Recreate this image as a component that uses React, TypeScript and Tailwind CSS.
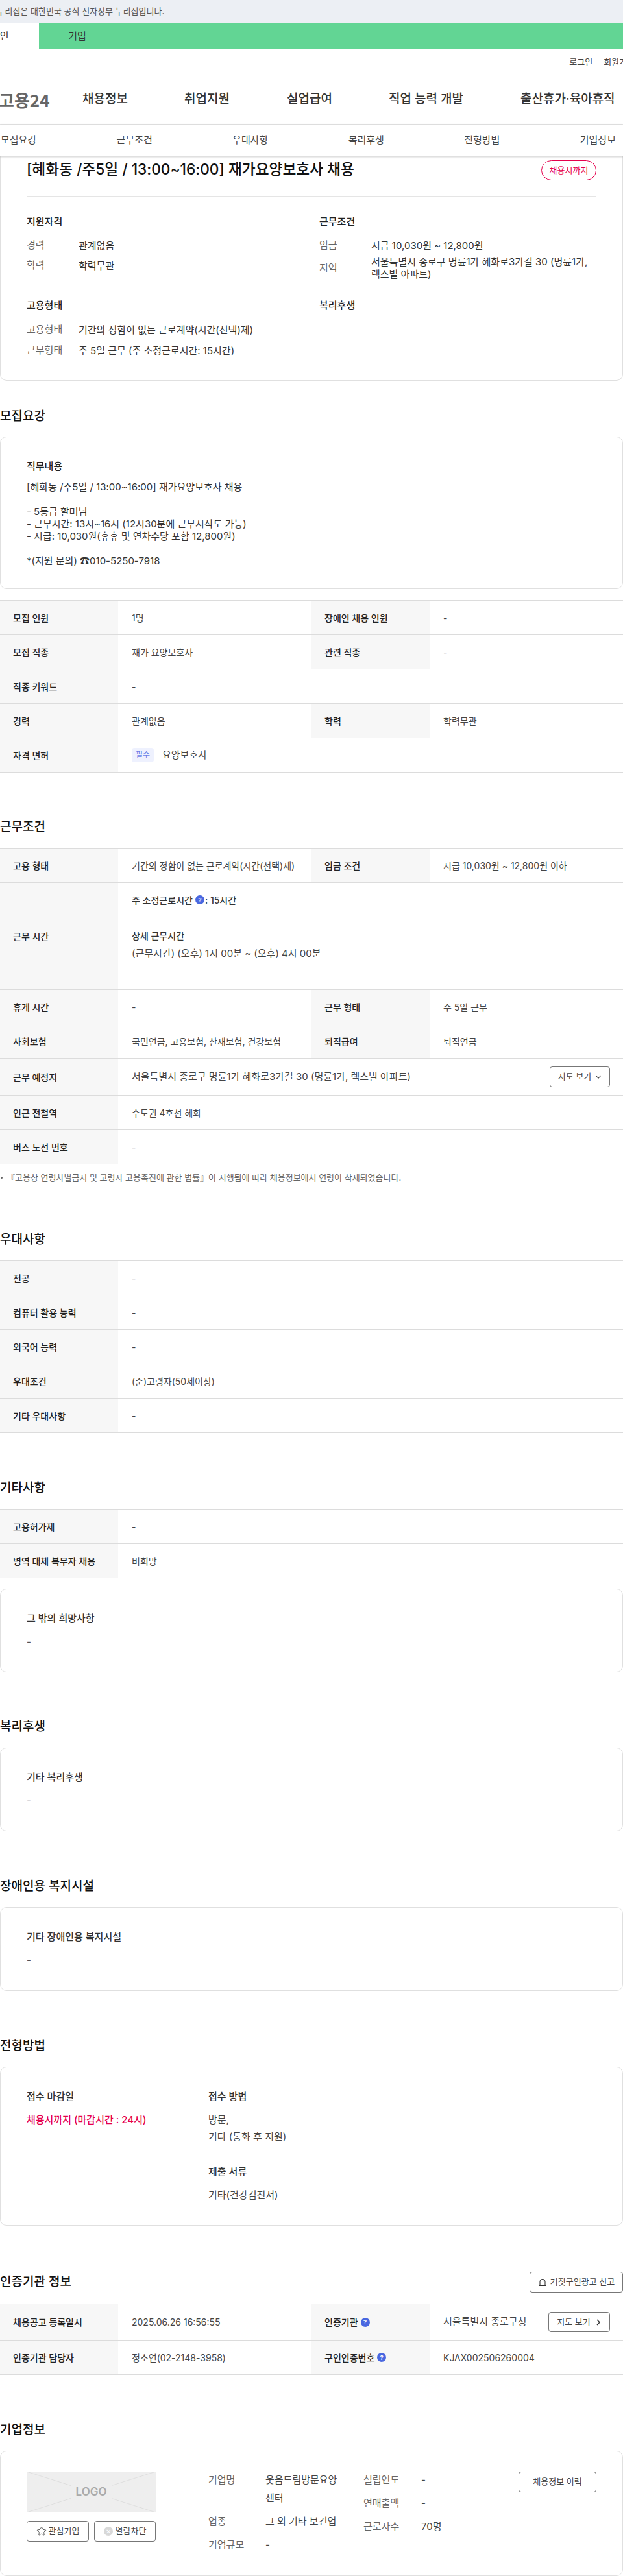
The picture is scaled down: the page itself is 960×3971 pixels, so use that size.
import React from 'react';
import { Star } from 'lucide-react';

type Cell = { label: React.ReactNode; value: React.ReactNode };

const Help = () => (
  <span className="inline-flex h-[14px] w-[14px] items-center justify-center rounded-full bg-[#4a68e0] text-[9px] font-bold leading-none text-white">?</span>
);

const Row = ({ cells, h = 'h-[53px]' }: { cells: Cell[]; h?: string }) => (
  <div className={`flex border-b border-[#dcdcdc] ${h}`}>
    {cells.map((c, i) => (
      <div key={i} className={`flex ${cells.length === 1 ? 'w-full' : 'w-1/2'}`}>
        <div className="flex w-[182px] shrink-0 items-center bg-[#f7f7f7] pl-5 text-[14px] font-medium text-[#222]">{c.label}</div>
        <div className="flex min-w-0 flex-1 items-center pl-[21px] text-[14px] text-[#444]">{c.value}</div>
      </div>
    ))}
  </div>
);

const Table = ({ children, className = '' }: { children: React.ReactNode; className?: string }) => (
  <div className={`border-t border-[#dcdcdc] ${className}`}>{children}</div>
);

const Card = ({ children, className = '' }: { children: React.ReactNode; className?: string }) => (
  <div className={`rounded-[10px] border border-[#e0e0e0] px-10 ${className}`}>{children}</div>
);

const H2 = ({ children, className = '' }: { children: React.ReactNode; className?: string }) => (
  <h2 className={`text-[19px] leading-[28px] font-medium text-[#111] ${className}`}>{children}</h2>
);

const Info = ({ k, children, className = '' }: { k: string; children: React.ReactNode; className?: string }) => (
  <div className={`flex items-center text-[15px] ${className}`}>
    <span className="w-20 shrink-0 text-[#666]">{k}</span>
    <span className="leading-[19px] text-[#333]">{children}</span>
  </div>
);

const Outline = ({ children, className = '' }: { children: React.ReactNode; className?: string }) => (
  <button className={`flex items-center justify-center rounded-[4px] border border-[#777] bg-white text-[13px] text-[#444] ${className}`}>{children}</button>
);

const EmptyCard = ({ title, className = '' }: { title: string; className?: string }) => (
  <Card className={`h-[129px] pt-[34px] ${className}`}>
    <div className="text-[15px] leading-[22px] font-medium text-[#333]">{title}</div>
    <div className="mt-[14px] text-[15px] leading-[22px] text-[#555]">-</div>
  </Card>
);

export default function App() {
  return (
    <div className="w-[960px] overflow-hidden bg-white font-['Inter','Noto_Sans_CJK_KR',sans-serif]">
      {/* 상단 배너 */}
      <div className="flex h-9 items-center overflow-hidden whitespace-nowrap bg-[#eceff4] text-[13px] text-[#555]">
        <span className="ml-[-20px]">이 누리집은 대한민국 공식 전자정부 누리집입니다.</span>
      </div>
      <div className="flex h-10 bg-[#62d594] text-[15px] text-[#333]">
        <div className="flex w-[60px] items-center bg-white">
          <span className="ml-[-14px]">개인</span>
        </div>
        <div className="flex w-[119px] items-center justify-center border-r border-[#55c888]">기업</div>
      </div>

      {/* 헤더 */}
      <div className="flex h-10 items-center justify-end overflow-hidden whitespace-nowrap text-[13px] text-[#444]">
        <span className="mr-[17px]">로그인</span>
        <span className="mr-[-18px]">회원가입</span>
      </div>
      <div className="flex h-[76px] items-center whitespace-nowrap border-b border-[#e5e5e5] text-[19px] font-medium text-[#333]">
        <span className="ml-[-2px] w-[129px] font-['Noto_Sans_CJK_KR',sans-serif] text-[26px] font-semibold text-[#666]">고용24</span>
        <span className="w-[157px]">채용정보</span>
        <span className="w-[158px]">취업지원</span>
        <span className="w-[157px]">실업급여</span>
        <span className="w-[203px]">직업 능력 개발</span>
        <span>출산휴가·육아휴직</span>
      </div>
      <div className="relative z-10 flex h-[49px] items-center justify-between bg-white pl-px pr-[11px] text-[15px] text-[#444] shadow-[0_1px_3px_rgba(0,0,0,0.2)]">
        <span>모집요강</span>
        <span>근무조건</span>
        <span>우대사항</span>
        <span>복리후생</span>
        <span>전형방법</span>
        <span>기업정보</span>
      </div>

      {/* 공고 요약 */}
      <Card className="h-[346px] rounded-t-none border-t-0 pt-[2px]">
        <div className="flex h-[60px] items-start justify-between border-b border-[#e5e5e5]">
          <h1 className="text-[22.7px] leading-[36px] font-medium text-[#111]">[혜화동 /주5일 / 13:00~16:00] 재가요양보호사 채용</h1>
          <span className="mt-[4px] flex h-[31px] w-[85px] items-center justify-center rounded-full border border-[#e6004d] text-[13px] text-[#e6004d]">채용시까지</span>
        </div>
        <div className="mt-[28px] flex">
          <div className="w-[451px]">
            <div className="text-[15px] leading-[22px] font-medium text-[#222]">지원자격</div>
            <Info k="경력" className="mt-[14px] h-[22px]">관계없음</Info>
            <Info k="학력" className="mt-[9px] h-[22px]">학력무관</Info>
          </div>
          <div className="flex-1">
            <div className="text-[15px] leading-[22px] font-medium text-[#222]">근무조건</div>
            <Info k="임금" className="mt-[14px] h-[22px]">시급 10,030원 ~ 12,800원</Info>
            <Info k="지역" className="mt-[5px]">서울특별시 종로구 명륜1가 혜화로3가길 30 (명륜1가, 렉스빌 아파트)</Info>
          </div>
        </div>
        <div className="mt-[28px] flex">
          <div className="w-[451px]">
            <div className="text-[15px] leading-[22px] font-medium text-[#222]">고용형태</div>
            <Info k="고용형태" className="mt-[15px] h-[22px]">기간의 정함이 없는 근로계약(시간(선택)제)</Info>
            <Info k="근무형태" className="mt-[10px] h-[22px]">주 5일 근무 (주 소정근로시간: 15시간)</Info>
          </div>
          <div className="flex-1">
            <div className="text-[15px] leading-[22px] font-medium text-[#222]">복리후생</div>
          </div>
        </div>
      </Card>

      {/* 모집요강 */}
      <H2 className="mt-[41px]">모집요강</H2>
      <Card className="mt-[17px] h-[235px] pt-[34px]">
        <div className="text-[15px] leading-[22px] font-medium text-[#222]">직무내용</div>
        <div className="mt-[11px] whitespace-pre-line text-[15px] leading-[19px] text-[#333]">
          {'[혜화동 /주5일 / 13:00~16:00] 재가요양보호사 채용\n\n- 5등급 할머님\n- 근무시간: 13시~16시 (12시30분에 근무시작도 가능)\n- 시급: 10,030원(휴휴 및 연차수당 포함 12,800원)\n\n*(지원 문의) ☎010-5250-7918'}
        </div>
      </Card>
      <Table className="mt-[17px]">
        <Row cells={[{ label: '모집 인원', value: '1명' }, { label: '장애인 채용 인원', value: '-' }]} />
        <Row cells={[{ label: '모집 직종', value: '재가 요양보호사' }, { label: '관련 직종', value: '-' }]} />
        <Row cells={[{ label: '직종 키워드', value: '-' }]} />
        <Row cells={[{ label: '경력', value: '관계없음' }, { label: '학력', value: '학력무관' }]} />
        <Row
          cells={[
            {
              label: '자격 면허',
              value: (
                <span className="flex items-center gap-[13px] text-[15px]">
                  <span className="flex h-[22px] w-[34px] items-center justify-center rounded-[4px] bg-[#eef1fe] text-[12px] text-[#6a7fe8]">필수</span>
                  요양보호사
                </span>
              ),
            },
          ]}
        />
      </Table>

      {/* 근무조건 */}
      <H2 className="mt-[70px]">근무조건</H2>
      <Table className="mt-[18px]">
        <Row cells={[{ label: '고용 형태', value: '기간의 정함이 없는 근로계약(시간(선택)제)' }, { label: '임금 조건', value: '시급 10,030원 ~ 12,800원 이하' }]} />
        <Row
          h="h-[165px]"
          cells={[
            {
              label: '근무 시간',
              value: (
                <div className="h-full pt-[15px]">
                  <div className="flex h-[22px] items-center gap-[4px] font-medium text-[#333]">
                    주 소정근로시간 <Help /><span className="ml-[-3px]">: 15시간</span>
                  </div>
                  <div className="mt-[34px] h-[22px] font-medium text-[#333]">상세 근무시간</div>
                  <div className="mt-[5px] h-[22px] text-[15px]">(근무시간) (오후) 1시 00분 ~ (오후) 4시 00분</div>
                </div>
              ),
            },
          ]}
        />
        <Row cells={[{ label: '휴게 시간', value: '-' }, { label: '근무 형태', value: '주 5일 근무' }]} />
        <Row cells={[{ label: '사회보험', value: '국민연금, 고용보험, 산재보험, 건강보험' }, { label: '퇴직급여', value: '퇴직연금' }]} />
        <Row
          h="h-[57px]"
          cells={[
            {
              label: '근무 예정지',
              value: (
                <div className="flex w-full items-center justify-between pr-5 text-[15px]">
                  <span>서울특별시 종로구 명륜1가 혜화로3가길 30 (명륜1가, 렉스빌 아파트)</span>
                  <Outline className="h-8 w-[93px] gap-[6px]">
                    지도 보기
                    <svg width="10" height="10" viewBox="0 0 10 10" fill="none" stroke="#444" strokeWidth="1.2"><path d="M1 3.2 5 7.2l4-4" /></svg>
                  </Outline>
                </div>
              ),
            },
          ]}
        />
        <Row cells={[{ label: '인근 전철역', value: '수도권 4호선 혜화' }]} />
        <Row cells={[{ label: '버스 노선 번호', value: '-' }]} />
      </Table>
      <div className="mt-[10px] flex items-center text-[13px] leading-[20px] text-[#666]">
        <span className="ml-[1px] mr-[6px] h-[3px] w-[3px] rounded-full bg-[#666]" />
        『고용상 연령차별금지 및 고령자 고용촉진에 관한 법률』이 시행됨에 따라 채용정보에서 연령이 삭제되었습니다.
      </div>

      {/* 우대사항 */}
      <H2 className="mt-[72px]">우대사항</H2>
      <Table className="mt-[18px]">
        <Row cells={[{ label: '전공', value: '-' }]} />
        <Row cells={[{ label: '컴퓨터 활용 능력', value: '-' }]} />
        <Row cells={[{ label: '외국어 능력', value: '-' }]} />
        <Row cells={[{ label: '우대조건', value: '(준)고령자(50세이상)' }]} />
        <Row cells={[{ label: '기타 우대사항', value: '-' }]} />
      </Table>

      {/* 기타사항 */}
      <H2 className="mt-[71px]">기타사항</H2>
      <Table className="mt-[18px]">
        <Row cells={[{ label: '고용허가제', value: '-' }]} />
        <Row cells={[{ label: '병역 대체 복무자 채용', value: '비희망' }]} />
      </Table>
      <EmptyCard title="그 밖의 희망사항" className="mt-[16px]" />

      {/* 복리후생 */}
      <H2 className="mt-[70px]">복리후생</H2>
      <EmptyCard title="기타 복리후생" className="mt-[18px]" />

      {/* 장애인용 복지시설 */}
      <H2 className="mt-[71px]">장애인용 복지시설</H2>
      <EmptyCard title="기타 장애인용 복지시설" className="mt-[18px]" />

      {/* 전형방법 */}
      <H2 className="mt-[71px]">전형방법</H2>
      <Card className="mt-[18px] h-[245px] pt-[32px]">
        <div className="flex h-[180px]">
          <div className="w-[240px] border-r border-[#e5e5e5] pt-[2px]">
            <div className="text-[15px] leading-[22px] font-medium text-[#333]">접수 마감일</div>
            <div className="mt-[14px] text-[15px] leading-[22px] font-medium text-[#e6004d]">채용시까지 (마감시간 : 24시)</div>
          </div>
          <div className="pl-10 pt-[2px]">
            <div className="text-[15px] leading-[22px] font-medium text-[#333]">접수 방법</div>
            <div className="mt-[12px] text-[15px] leading-[26px] text-[#444]">방문,<br />기타 (통화 후 지원)</div>
            <div className="mt-[30px] text-[15px] leading-[22px] font-medium text-[#333]">제출 서류</div>
            <div className="mt-[14px] text-[15px] leading-[22px] text-[#444]">기타(건강검진서)</div>
          </div>
        </div>
      </Card>

      {/* 인증기관 정보 */}
      <div className="mt-[71px] flex items-center justify-between">
        <H2>인증기관 정보</H2>
        <Outline className="h-8 w-[144px] gap-[5px]">
          <svg width="14" height="14" viewBox="0 0 14 14" fill="none" stroke="#333" strokeWidth="1.1"><path d="M3 12.5V6.5a4 4 0 0 1 8 0v6M1 12.5h12M7.5 4.5l1 1.5" /></svg>
          거짓구인광고 신고
        </Outline>
      </div>
      <Table className="mt-[17px]">
        <Row
          h="h-[56px]"
          cells={[
            { label: '채용공고 등록일시', value: '2025.06.26 16:56:55' },
            {
              label: <span className="flex items-center gap-[4px]">인증기관 <Help /></span>,
              value: (
                <div className="flex w-full items-center justify-between pr-5 text-[15px]">
                  <span>서울특별시 종로구청</span>
                  <Outline className="h-[31px] w-[95px] gap-2">
                    지도 보기
                    <svg width="9" height="12" viewBox="0 0 9 12" fill="none" stroke="#333" strokeWidth="1.5"><path d="m2 2 4 4-4 4" /></svg>
                  </Outline>
                </div>
              ),
            },
          ]}
        />
        <Row
          cells={[
            { label: '인증기관 담당자', value: '정소연(02-2148-3958)' },
            { label: <span className="flex items-center gap-[4px]">구인인증번호 <Help /></span>, value: 'KJAX002506260004' },
          ]}
        />
      </Table>

      {/* 기업정보 */}
      <H2 className="mt-[71px]">기업정보</H2>
      <Card className="mt-[18px] h-[193px] pt-[31px]">
        <div className="flex h-[128px]">
          <div className="w-[240px] border-r border-[#e5e5e5]">
            <div className="relative flex h-[63px] w-[199px] items-center justify-center overflow-hidden bg-[#eeeeee]">
              <svg className="absolute inset-0" width="199" height="63" viewBox="0 0 199 63" stroke="#dedede" strokeWidth="1"><path d="M0 0 199 63M199 0 0 63" /></svg>
              <span className="relative bg-[#eeeeee] px-[7px] text-[17px] font-semibold text-[#aaaaaa]">LOGO</span>
            </div>
            <div className="mt-[13px] flex w-[199px] justify-between">
              <Outline className="h-8 w-[96px] gap-[3px]"><Star size={16} strokeWidth={1.3} />관심기업</Outline>
              <Outline className="h-8 w-[95px] gap-[4px]">
                <span className="flex h-[14px] w-[14px] items-center justify-center rounded-full bg-[#d8d8d8] text-[10px] leading-none text-white">✕</span>
                열람차단
              </Outline>
            </div>
          </div>
          <div className="flex flex-1 pl-10">
            <div className="mt-[-1px] w-[239px] text-[15px] leading-[28px]">
              <div className="flex"><span className="w-[88px] shrink-0 text-[#666]">기업명</span><span className="w-[112px] text-[#444]">웃음드림방문요양센터</span></div>
              <div className="mt-[8px] flex"><span className="w-[88px] shrink-0 text-[#666]">업종</span><span className="text-[#444]">그 외 기타 보건업</span></div>
              <div className="mt-[8px] flex"><span className="w-[88px] shrink-0 text-[#666]">기업규모</span><span className="text-[#444]">-</span></div>
            </div>
            <div className="mt-[-1px] text-[15px] leading-[28px]">
              <div className="flex"><span className="w-[89px] shrink-0 text-[#666]">설립연도</span><span className="text-[#444]">-</span></div>
              <div className="mt-[8px] flex"><span className="w-[89px] shrink-0 text-[#666]">연매출액</span><span className="text-[#444]">-</span></div>
              <div className="mt-[8px] flex"><span className="w-[89px] shrink-0 text-[#666]">근로자수</span><span className="text-[#444]">70명</span></div>
            </div>
            <div className="flex-1" />
            <Outline className="h-8 w-[120px]">채용정보 이력</Outline>
          </div>
        </div>
      </Card>
    </div>
  );
}
